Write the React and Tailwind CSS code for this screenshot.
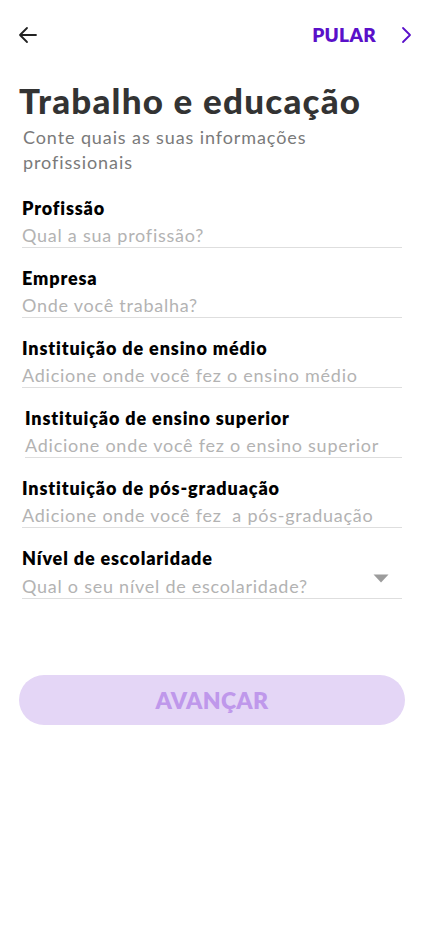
import React from "react";

const fields = [
  { label: "Profissão", ph: "Qual a sua profissão?", pl: "pl-[22px]" },
  { label: "Empresa", ph: "Onde você trabalha?", pl: "pl-[22px]" },
  { label: "Instituição de ensino médio", ph: "Adicione onde você fez o ensino médio", pl: "pl-[22px]" },
  { label: "Instituição de ensino superior", ph: "Adicione onde você fez o ensino superior", pl: "pl-[25px]" },
  { label: "Instituição de pós-graduação", ph: "Adicione onde você fez  a pós-graduação", pl: "pl-[22px]" },
];

export default function App() {
  return (
    <div className="w-[430px] h-[932px] bg-white font-['Lato',sans-serif] flex flex-col">
      <div className="flex items-center justify-between h-[34px] mt-[18px] pl-[18px] pr-[18px]">
        <svg width="20" height="20" viewBox="0 0 20 20" fill="none" stroke="#222" strokeWidth="1.8" strokeLinecap="round" strokeLinejoin="round">
          <path d="M18 10H2M9 3L2 10L9 17" />
        </svg>
        <div className="flex items-center">
          <span className="text-[19px] font-extrabold text-[#5a10c9] tracking-[0.3px]">PULAR</span>
          <svg className="ml-[24px]" width="12" height="18" viewBox="0 0 12 18" fill="none" stroke="#5a10c9" strokeWidth="1.8" strokeLinecap="round" strokeLinejoin="round">
            <path d="M3 2L10 9L3 16" />
          </svg>
        </div>
      </div>
      <h1 className="mt-[28px] pl-[19px] text-[35px] leading-[40px] font-black text-[#333] tracking-[1.2px]">Trabalho e educação</h1>
      <p className="mt-[5px] pl-[23px] pr-[100px] text-[18px] leading-[25px] text-[#7a7a7a] tracking-[0.9px]">Conte quais as suas informações profissionais</p>
      <div className="mt-[21px] flex flex-col gap-[18px]">
        {fields.map((f) => (
          <div key={f.label} className={`${f.pl} pr-[28px]`}>
            <div className="text-[18px] leading-[24px] font-extrabold text-black tracking-[0.85px]">{f.label}</div>
            <div className="mt-[4px] text-[18px] leading-[22px] text-[#b3b3b3] border-b border-[#dedede] pb-[1px] whitespace-pre tracking-[0.75px]">{f.ph}</div>
          </div>
        ))}
        <div className="pl-[22px] pr-[28px]">
          <div className="text-[18px] leading-[24px] font-extrabold text-black tracking-[0.85px]">Nível de escolaridade</div>
          <div className="mt-[4px] flex items-center justify-between text-[18px] leading-[22px] text-[#b3b3b3] border-b border-[#dedede] pb-[1px] tracking-[0.75px]">
            <span>Qual o seu nível de escolaridade?</span>
            <svg className="mr-[13px] mb-[14px]" width="16" height="9" viewBox="0 0 16 9">
              <path d="M0.5 0.5H15.5L8 8.5Z" fill="#9c9c9c" />
            </svg>
          </div>
        </div>
      </div>
      <div className="mt-[76px] px-[19px]">
        <div className="h-[50px] w-[386px] rounded-full bg-[#e4d6f6] flex items-center justify-center">
          <span className="text-[23px] font-extrabold text-[#bf98eb] tracking-[0.3px]">AVANÇAR</span>
        </div>
      </div>
    </div>
  );
}
